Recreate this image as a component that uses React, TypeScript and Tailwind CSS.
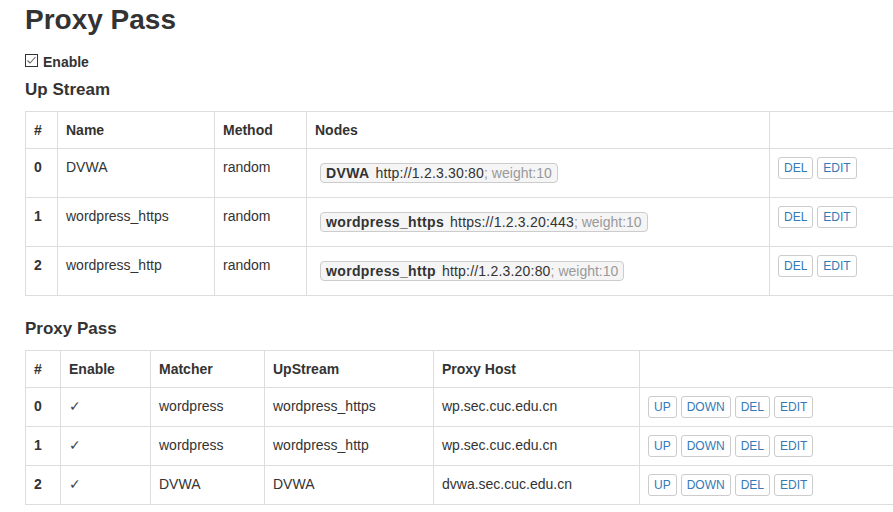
const upstreams = [
  { name: "DVWA", method: "random", url: "http://1.2.3.30:80", weight: 10 },
  { name: "wordpress_https", method: "random", url: "https://1.2.3.20:443", weight: 10 },
  { name: "wordpress_http", method: "random", url: "http://1.2.3.20:80", weight: 10 },
];

const passes = [
  { matcher: "wordpress", upstream: "wordpress_https", host: "wp.sec.cuc.edu.cn" },
  { matcher: "wordpress", upstream: "wordpress_http", host: "wp.sec.cuc.edu.cn" },
  { matcher: "DVWA", upstream: "DVWA", host: "dvwa.sec.cuc.edu.cn" },
];

function Btn({ children }: { children: string }) {
  return (
    <button className="h-[22px] px-[5px] border border-[#ccc] rounded-[3px] bg-white text-[12px] leading-[18px] text-[#337ab7]">
      {children}
    </button>
  );
}

const th = "border border-[#ddd] px-[8px] py-[8px] text-left font-bold leading-[20px] align-top";
const td = "border border-[#ddd] px-[8px] py-[8px] leading-[20px] align-top";

export default function App() {
  return (
    <div
      className="h-screen w-full overflow-hidden bg-white text-[14px] text-[#333]"
      style={{ fontFamily: '"Liberation Sans", Arial, sans-serif' }}
    >
      <div className="pl-[25px]">
        <h1 className="text-[28px] font-bold leading-[40px]">Proxy Pass</h1>

        <label className="mt-[12px] flex h-[20px] items-center gap-[5px] font-bold">
          <svg width="13" height="13" viewBox="0 0 13 13" className="mb-[3px]">
            <rect x="0.5" y="0.5" width="12" height="12" fill="white" stroke="#333" />
            <path d="M2.5 6.5 L5 9 L10.5 3" fill="none" stroke="#666" strokeWidth="1.1" />
          </svg>
          Enable
        </label>

        <h2 className="mt-[6px] text-[17px] font-bold leading-[24px]">Up Stream</h2>

        <table className="mt-[9px] w-[960px] table-fixed border-collapse">
          <colgroup>
            <col className="w-[32px]" />
            <col className="w-[157px]" />
            <col className="w-[92px]" />
            <col className="w-[463px]" />
            <col />
          </colgroup>
          <thead>
            <tr>
              <th className={th}>#</th>
              <th className={th}>Name</th>
              <th className={th}>Method</th>
              <th className={th}>Nodes</th>
              <th className={th}></th>
            </tr>
          </thead>
          <tbody>
            {upstreams.map((u, i) => (
              <tr key={u.name}>
                <td className={td + " font-bold"}>{i}</td>
                <td className={td}>{u.name}</td>
                <td className={td}>{u.method}</td>
                <td className={td}>
                  <div className="flex py-[6px] pl-[5px]">
                    <span className="inline-flex h-[20px] items-center whitespace-nowrap rounded-[4px] border border-[#ccc] bg-[#f5f5f5] px-[5px] leading-[18px]">
                      <b className="mr-[6px] tracking-[0.35px]">{u.name}</b>
                      <span className="tracking-[0.2px]">{u.url}</span>
                      <span className="text-[#999]">; weight:{u.weight}</span>
                    </span>
                  </div>
                </td>
                <td className={td}>
                  <div className="flex gap-[4px]">
                    <Btn>DEL</Btn>
                    <Btn>EDIT</Btn>
                  </div>
                </td>
              </tr>
            ))}
          </tbody>
        </table>

        <h2 className="mt-[21px] text-[17px] font-bold leading-[24px]">Proxy Pass</h2>

        <table className="mt-[9px] w-[960px] table-fixed border-collapse">
          <colgroup>
            <col className="w-[35px]" />
            <col className="w-[90px]" />
            <col className="w-[114px]" />
            <col className="w-[169px]" />
            <col className="w-[206px]" />
            <col />
          </colgroup>
          <thead>
            <tr>
              <th className={th}>#</th>
              <th className={th}>Enable</th>
              <th className={th}>Matcher</th>
              <th className={th}>UpStream</th>
              <th className={th}>Proxy Host</th>
              <th className={th}></th>
            </tr>
          </thead>
          <tbody>
            {passes.map((p, i) => (
              <tr key={i}>
                <td className={td + " font-bold"}>{i}</td>
                <td className={td + " text-[#444]"}>✓</td>
                <td className={td}>{p.matcher}</td>
                <td className={td}>{p.upstream}</td>
                <td className={td}>{p.host}</td>
                <td className={td}>
                  <div className="flex h-[22px] items-start gap-[4px]">
                    <Btn>UP</Btn>
                    <Btn>DOWN</Btn>
                    <Btn>DEL</Btn>
                    <Btn>EDIT</Btn>
                  </div>
                </td>
              </tr>
            ))}
          </tbody>
        </table>
      </div>
    </div>
  );
}
